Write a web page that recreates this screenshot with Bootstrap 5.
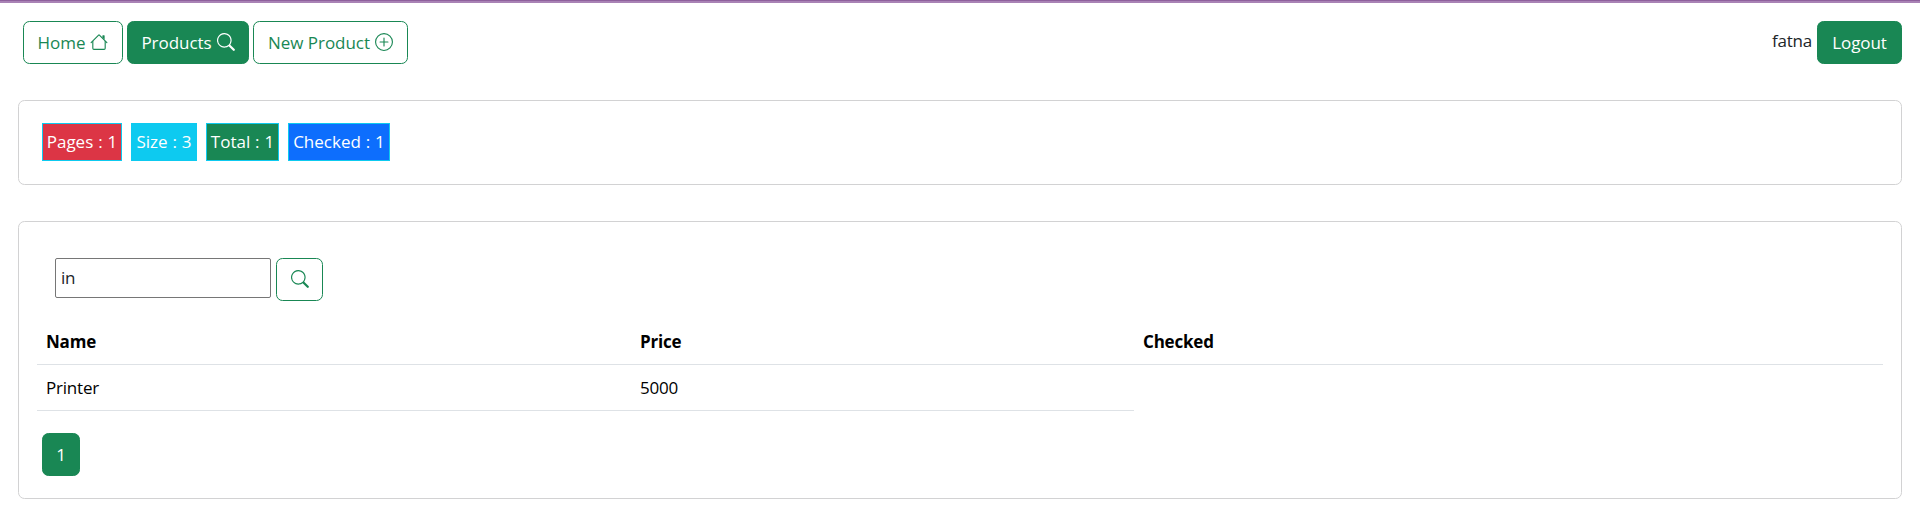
<!DOCTYPE html>
<html lang="en">
<head>
<meta charset="utf-8">
<title>Products</title>
<link href="https://cdn.jsdelivr.net/npm/bootstrap@5.3.0/dist/css/bootstrap.min.css" rel="stylesheet">
<style>
html{font-size:18px}
body{font-family:"Segoe UI","Open Sans","Noto Sans",sans-serif;font-size:17px;line-height:27px;letter-spacing:-.2px;border-top:1px solid #8e609c}
.accent{height:2px;background:#a982b5}
.btn{font-size:17px;line-height:27px;height:43px;padding:7px 0;border-radius:6.5px;white-space:nowrap;display:inline-flex;align-items:center;justify-content:center;gap:5px;letter-spacing:-.05px}
.btn svg{width:18px;height:18px;flex:none;fill:currentColor;margin-top:-1px}
.topnav{padding:18px 18px 0 23px;gap:4px}
.w-home{width:100px}.w-products{width:122px}.w-new{width:155px}.w-logout{width:85px}.w-search{width:47px}.w-page{width:38px}
.user-name{margin-top:6px;margin-right:1px}
.card{margin:0 18px;border-color:#d2d2d3;border-radius:6.5px}
.stats{margin-top:36px;height:85px;padding:22px 23px;gap:9px}
.stat{height:38px;line-height:36px;border:1px solid #0dcaf0;color:#fff;text-align:center;white-space:nowrap;letter-spacing:0;word-spacing:.5px}
.s-pages{width:80px}.s-size{width:66px}.s-total{width:73px}.s-checked{width:102px}
.list-card{margin-top:36px;height:278px;padding:36px 18px 0}
.finder{padding-left:18px;gap:5px}
.finder input{width:216px;height:40px;border:1px solid #767676;border-radius:2px;padding:0 6px 2px 5px;color:#212529;letter-spacing:inherit}
.table{width:1846px;table-layout:fixed;margin:17px 0 0;--bs-table-color:#000;border-color:#dee2e6}
.table>:not(caption)>*>*{padding:9px;height:46px}
.pager{margin:22px 0 0 5px}
</style>
</head>
<body>
<div class="accent"></div>
<nav class="topnav d-flex align-items-start">
  <a class="btn btn-outline-success w-home" href="#">Home
    <svg viewBox="0 0 16 16"><path fill-rule="evenodd" d="M2 13.5V7h1v6.5a.5.5 0 0 0 .5.5h9a.5.5 0 0 0 .5-.5V7h1v6.5a1.5 1.5 0 0 1-1.5 1.5h-9A1.5 1.5 0 0 1 2 13.5zm11-11V6l-2-2V2.5a.5.5 0 0 1 .5-.5h1a.5.5 0 0 1 .5.5z"/><path fill-rule="evenodd" d="M7.293 1.5a1 1 0 0 1 1.414 0l6.647 6.646a.5.5 0 0 1-.708.708L8 2.207 1.354 8.854a.5.5 0 1 1-.708-.708L7.293 1.5z"/></svg></a>
  <a class="btn btn-success w-products" href="#">Products
    <svg viewBox="0 0 16 16"><path d="M11.742 10.344a6.5 6.5 0 1 0-1.397 1.398l3.85 3.85a1 1 0 0 0 1.415-1.414l-3.868-3.834zM12 6.5a5.5 5.5 0 1 1-11 0 5.5 5.5 0 0 1 11 0z"/></svg></a>
  <a class="btn btn-outline-success w-new" href="#">New Product
    <svg viewBox="0 0 16 16"><path d="M8 15A7 7 0 1 1 8 1a7 7 0 0 1 0 14zm0 1A8 8 0 1 0 8 0a8 8 0 0 0 0 16z"/><path d="M8 4a.5.5 0 0 1 .5.5v3h3a.5.5 0 0 1 0 1h-3v3a.5.5 0 0 1-1 0v-3h-3a.5.5 0 0 1 0-1h3v-3A.5.5 0 0 1 8 4z"/></svg></a>
  <span class="user-name ms-auto">fatna</span>
  <a class="btn btn-success w-logout" href="#">Logout</a>
</nav>
<section class="card stats flex-row">
  <div class="stat s-pages bg-danger">Pages : 1</div>
  <div class="stat s-size bg-info">Size : 3</div>
  <div class="stat s-total bg-success">Total : 1</div>
  <div class="stat s-checked bg-primary">Checked : 1</div>
</section>
<section class="card list-card">
  <form class="finder d-flex align-items-start">
    <input type="text" value="in" aria-label="Keyword">
    <button type="button" class="btn btn-outline-success w-search" aria-label="Search">
      <svg viewBox="0 0 16 16"><path d="M11.742 10.344a6.5 6.5 0 1 0-1.397 1.398l3.85 3.85a1 1 0 0 0 1.415-1.414l-3.868-3.834zM12 6.5a5.5 5.5 0 1 1-11 0 5.5 5.5 0 0 1 11 0z"/></svg></button>
  </form>
  <table class="table">
    <colgroup><col style="width:594px"><col style="width:503px"><col></colgroup>
    <thead><tr><th>Name</th><th>Price</th><th>Checked</th></tr></thead>
    <tbody><tr><td>Printer</td><td>5000</td></tr></tbody>
  </table>
  <div class="pager"><a class="btn btn-success w-page" href="#">1</a></div>
</section>
<script src="https://cdn.jsdelivr.net/npm/bootstrap@5.3.0/dist/js/bootstrap.bundle.min.js"></script>
</body>
</html>
